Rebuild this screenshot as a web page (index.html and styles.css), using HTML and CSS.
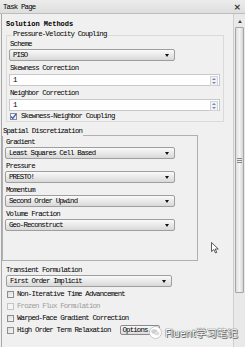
FILE: index.html
```html
<!DOCTYPE html>
<html lang="en">

<head>
    <meta charset="UTF-8">
    <meta name="viewport" content="width=device-width, initial-scale=1.0">
    <title>Task Page</title>
    <link rel="stylesheet" href="styles.css">
</head>

<body>
    <div class="window">
        <div class="titlebar">
            <span class="title">Task Page</span>
            <span class="close">&#215;</span>
        </div>

        <div class="main">
            <div class="content">
                <div class="heading">Solution Methods</div>

                <div class="group pv">
                    <div class="legend">Pressure-Velocity Coupling</div>
                    <div class="label">Scheme</div>
                    <div class="select w166">PISO</div>
                    <div class="label gap">Skewness Correction</div>
                    <div class="input">1<span class="spin"></span></div>
                    <div class="label gap">Neighbor Correction</div>
                    <div class="input">1<span class="spin"></span></div>
                    <div class="check-row">
                        <span class="box checked">
                            <svg width="7" height="7" viewBox="0 0 7 7">
                                <path d="M1 3.5 L2.8 5.5 L6 1" fill="none" stroke="#3a64c8" stroke-width="1.3" />
                            </svg>
                        </span>
                        Skewness-Neighbor Coupling
                    </div>
                </div>

                <div class="group spatial">
                    <div class="legend">Spatial Discretization</div>
                    <div class="label first">Gradient</div>
                    <div class="select w170">Least Squares Cell Based</div>
                    <div class="label gap">Pressure</div>
                    <div class="select w170">PRESTO!</div>
                    <div class="label gap">Momentum</div>
                    <div class="select w170">Second Order Upwind</div>
                    <div class="label gap">Volume Fraction</div>
                    <div class="select w170">Geo-Reconstruct</div>
                </div>

                <div class="transient">
                    <div class="label">Transient Formulation</div>
                    <div class="select w166">First Order Implicit</div>
                </div>

                <div class="options">
                    <div class="opt"><span class="box"></span>Non-Iterative Time Advancement</div>
                    <div class="opt disabled"><span class="box"></span>Frozen Flux Formulation</div>
                    <div class="opt"><span class="box"></span>Warped-Face Gradient Correction</div>
                    <div class="opt"><span class="box"></span>High Order Term Relaxation<span class="button">Options...</span></div>
                </div>

                <div class="pointer">
                    <svg width="8" height="12" viewBox="0 0 8 12">
                        <path d="M0.5 0.5 L0.5 9.5 L2.8 7.5 L4.5 11 L5.8 10.4 L4.2 7 L7.3 7 Z" fill="#fff" stroke="#333" stroke-width="0.8" />
                    </svg>
                </div>
            </div>

            <div class="scrollbar">
                <div class="arrow-up"></div>
                <div class="thumb"><span class="grip"></span></div>
            </div>
        </div>

        <div class="watermark">
            <span class="wx">
                <svg width="13" height="13" viewBox="0 0 13 13">
                    <circle cx="6.5" cy="6.5" r="6" fill="#fff" stroke="#bbb" stroke-width="0.8" />
                    <ellipse cx="5.3" cy="5.6" rx="3" ry="2.4" fill="#cfcfcf" />
                    <ellipse cx="8" cy="7.6" rx="2.5" ry="2" fill="#dedede" />
                </svg>
            </span>
            <span class="wm-text">Fluent学习笔记</span>
        </div>
    </div>
</body>

</html>
```

FILE: styles.css
```css
/* styles.css */

body {
    margin: 0;
    background: #f0f0f0;
    font-family: "Liberation Mono", "DejaVu Sans Mono", monospace;
    font-size: 7.4px;
    letter-spacing: -0.84px;
    color: #000;
}

.window {
    position: relative;
    width: 245px;
    height: 347px;
    overflow: hidden;
    background: #f0f0f0;
}

.titlebar {
    height: 13px;
    border-bottom: 1px solid #bdbdbd;
    background: linear-gradient(#ececec, #dedede);
    display: flex;
    justify-content: space-between;
    align-items: center;
    padding: 0 4px 0 3px;
}

.close {
    font-family: "DejaVu Sans", sans-serif;
    font-size: 9px;
    font-weight: bold;
    letter-spacing: 0;
    color: #333;
}

.main {
    display: flex;
    height: 333px;
    padding-left: 1px;
    border-bottom: 2px solid #8c8c8c;
}

.content {
    position: relative;
    flex: 1;
    border-left: 1px solid #a8a8a8;
    padding-right: 9px;
}

.heading {
    font-weight: bold;
    font-size: 7px;
    letter-spacing: 0;
    line-height: 10px;
    margin: 5px 0 0 4px;
}

.label {
    line-height: 10px;
    padding-left: 1px;
}

.label.gap {
    margin-top: 2px;
}

.group {
    border: 1px solid #dadada;
}

.group .legend {
    display: table;
    line-height: 10px;
    background: #f0f0f0;
    padding: 0 1px;
}

.pv {
    margin: 6px 0 0 4px;
    padding: 0 3px 0 2px;
}

.pv .legend {
    margin: -7px 0 0 3px;
}

.spatial {
    width: 192px;
    margin-top: 13px;
    padding: 0 0 29px 2px;
    border-color: #b0b0b0;
}

.spatial .legend {
    margin: -10px 0 0 -3px;
}

.spatial .label.first {
    margin-top: 1px;
}

.select {
    position: relative;
    height: 12px;
    line-height: 11px;
    box-sizing: border-box;
    padding-left: 3px;
    border: 1px solid #9e9e9e;
    border-radius: 2px;
    background: linear-gradient(#fafafa, #e6e6e6 60%, #d8d8d8);
}

.select::after {
    content: "";
    position: absolute;
    right: 5px;
    top: 4px;
    border-left: 2.5px solid transparent;
    border-right: 2.5px solid transparent;
    border-top: 3px solid #111;
}

.w166 {
    width: 166px;
}

.w170 {
    width: 170px;
}

.input {
    position: relative;
    margin-top: 1px;
    height: 12px;
    line-height: 11px;
    box-sizing: border-box;
    padding-left: 3px;
    border: 1px solid #c8c8c8;
    background: #fff;
}

.spin {
    position: absolute;
    right: 1px;
    top: 1px;
    width: 6px;
    height: 8px;
    border: 1px solid #d4d4d4;
    background: #f2f2f2;
}

.spin::before,
.spin::after {
    content: "";
    position: absolute;
    left: 1px;
    border-left: 2px solid transparent;
    border-right: 2px solid transparent;
}

.spin::before {
    top: 1px;
    border-bottom: 2px solid #6c8ac8;
}

.spin::after {
    bottom: 1px;
    border-top: 2px solid #6c8ac8;
}

.check-row {
    display: flex;
    align-items: center;
    gap: 4px;
    line-height: 10px;
    padding-left: 1px;
}

.box {
    display: inline-block;
    width: 7px;
    height: 7px;
    box-sizing: border-box;
    border: 1px solid #8e8e8e;
    background: linear-gradient(135deg, #dcdcdc, #f8f8f8);
    flex-shrink: 0;
}

.box.checked {
    position: relative;
    background: #f6f6f6;
}

.box.checked svg {
    position: absolute;
    left: -1px;
    top: -1px;
}

.transient {
    margin: 4px 0 0 4px;
}

.transient .label {
    padding-left: 0;
}

.options {
    margin: 1px 0 0 5px;
}

.opt {
    display: flex;
    align-items: center;
    gap: 3px;
    height: 12px;
    white-space: nowrap;
}

.opt.disabled {
    color: #9c9c9c;
}

.opt.disabled .box {
    border-color: #c4c4c4;
    background: #f4f4f4;
}

.button {
    margin-left: 7px;
    height: 10px;
    line-height: 9px;
    box-sizing: border-box;
    padding: 0 1px;
    border: 1px solid #8a8a8a;
    border-radius: 2px;
    background: linear-gradient(#f8f8f8, #dcdcdc);
}

.pointer {
    position: absolute;
    left: 209px;
    top: 228px;
}

.scrollbar {
    width: 11px;
    border-left: 1px solid #cfcfcf;
    background: #e9e9e9;
    display: flex;
    flex-direction: column;
    align-items: center;
}

.arrow-up {
    margin-top: 6px;
    border-left: 2.5px solid transparent;
    border-right: 2.5px solid transparent;
    border-bottom: 3px solid #444;
}

.thumb {
    margin-top: 4px;
    width: 9px;
    height: 266px;
    box-sizing: border-box;
    border: 1px solid #a6a6a6;
    border-radius: 1px;
    background: linear-gradient(90deg, #dedede, #f4f4f4 50%, #d4d4d4);
    display: flex;
    align-items: center;
    justify-content: center;
}

.grip {
    width: 5px;
    height: 5px;
    background: repeating-linear-gradient(#888 0 1px, transparent 1px 2px);
}

.watermark {
    position: absolute;
    left: 149px;
    top: 325px;
    display: flex;
    align-items: center;
    gap: 3px;
    white-space: nowrap;
}

.wx svg {
    display: block;
}

.wm-text {
    font-family: "Noto Sans", "Noto Sans CJK SC", sans-serif;
    font-size: 10.5px;
    letter-spacing: 0;
    color: #fff;
    text-shadow: 0 0 1px #444, 0 0 1px #444, 1px 1px 0 #777;
}
```
